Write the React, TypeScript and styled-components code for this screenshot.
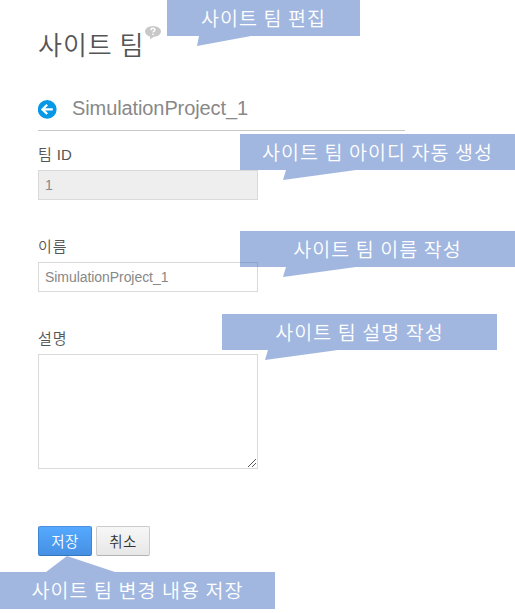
import React from 'react';
import styled, { createGlobalStyle } from 'styled-components';

const GlobalStyle = createGlobalStyle`
  * { box-sizing: border-box; }
  body { margin: 0; background: #fff; }
`;

const Page = styled.main`
  position: relative;
  width: 515px;
  height: 613px;
  overflow: hidden;
  padding: 26px 0 0 38px;
  color: #555;
  font-family: 'Liberation Sans', 'Noto Sans CJK KR', sans-serif;
  font-size: 14px;
`;

const Title = styled.h1`
  display: flex;
  align-items: flex-start;
  gap: 2px;
  height: 38px;
  margin: 0;
  font: 350 26px/36px 'Noto Sans CJK KR', sans-serif;
  letter-spacing: 1px;
  white-space: nowrap;
`;

const TitleText = styled.span`
  width: 105px;
`;

const HelpIcon = styled.svg`
  width: 16px;
  height: 14px;
`;

const Header = styled.header`
  display: flex;
  align-items: flex-start;
  gap: 15px;
  width: 367px;
  height: 45px;
  margin-top: 22px;
  padding-top: 10px;
  border-bottom: 1px solid #c8c8c8;
`;

const BackIcon = styled.svg`
  width: 19px;
  height: 19px;
  margin-top: 4px;
`;

const ProjectName = styled.h2`
  margin: 0;
  color: #888;
  font-size: 20px;
  line-height: 24px;
  font-weight: 400;
  letter-spacing: -0.1px;
`;

const Form = styled.form`
  width: 220px;
`;

const Field = styled.div<{ $gap: number }>`
  display: flex;
  flex-direction: column;
  margin-top: ${({ $gap }) => $gap}px;
`;

const Label = styled.label`
  height: 24px;
  margin-bottom: 3px;
  font: 350 15px/24px 'Liberation Sans', 'Noto Sans CJK KR', sans-serif;
  letter-spacing: 0.9px;
`;

const Latin = styled.span`
  margin-left: -1px;
  font-size: 15px;
  letter-spacing: 0;
`;

const Input = styled.input`
  width: 220px;
  height: 30px;
  padding: 0 6px;
  border: 1px solid #d9d9d9;
  border-radius: 0;
  outline: 0;
  background: #fff;
  color: #888;
  font: 14px 'Liberation Sans', sans-serif;
  letter-spacing: -0.06px;

  &:disabled { background: #eee; }
`;

const TextArea = styled.textarea`
  display: block;
  width: 220px;
  height: 115px;
  border: 1px solid #d9d9d9;
  outline: 0;
  resize: none;
`;

const AreaFrame = styled.div`
  position: relative;
`;

const Grip = styled.svg`
  position: absolute;
  right: 2px;
  bottom: 2px;
  width: 8px;
  height: 8px;
`;

const Actions = styled.div`
  display: flex;
  gap: 4px;
  margin-top: 57px;
`;

const Button = styled.button<{ $primary?: boolean }>`
  width: 54px;
  height: 30px;
  padding: 0;
  border: 1px solid;
  border-color: ${({ $primary }) => ($primary ? '#4b92df #3f86d2 #3577bd' : '#ccc #ccc #b3b3b3')};
  border-radius: 2px;
  background: ${({ $primary }) =>
    $primary ? 'linear-gradient(#54a9ff, #4690e3)' : 'linear-gradient(#f7f7f7, #e7e7e7)'};
  color: ${({ $primary }) => ($primary ? '#fff' : '#333')};
  font: 350 14.5px/26px 'Noto Sans CJK KR', sans-serif;
  letter-spacing: 0.4px;
`;

const Callout = styled.aside<{ $x: number; $y: number; $w: number; $h?: number }>`
  position: absolute;
  left: ${({ $x }) => $x}px;
  top: ${({ $y }) => $y}px;
  width: ${({ $w }) => $w}px;
  height: ${({ $h = 36 }) => $h}px;
  background: rgba(68, 112, 194, 0.5);
  color: #fff;
  font: 350 19.5px/36px 'Noto Sans CJK KR', sans-serif;
  letter-spacing: 1.1px;
  text-align: center;
  white-space: nowrap;
`;

const Tail = styled.span<{ $x: number; $w: number; $shape: string; $up?: boolean }>`
  position: absolute;
  left: ${({ $x }) => $x}px;
  top: ${({ $up }) => ($up ? '-16px' : '100%')};
  width: ${({ $w }) => $w}px;
  height: ${({ $up }) => ($up ? 16 : 10)}px;
  background: rgba(68, 112, 194, 0.5);
  clip-path: polygon(${({ $shape }) => $shape});
`;

const NOTES = [
  { text: '사이트 팀 편집', x: 167, y: 0, w: 193, tailX: 30, tailW: 54, shape: '2px 0, 54px 0, 0 10px' },
  { text: '사이트 팀 아이디 자동 생성', x: 240, y: 134, w: 275, tailX: 43, tailW: 73, shape: '3px 0, 73px 0, 0 10px' },
  { text: '사이트 팀 이름 작성', x: 240, y: 231, w: 275, tailX: 43, tailW: 73, shape: '3px 0, 73px 0, 0 10px' },
  { text: '사이트 팀 설명 작성', x: 222, y: 314, w: 275, tailX: 43, tailW: 73, shape: '3px 0, 73px 0, 0 10px' },
  { text: '사이트 팀 변경 내용 저장', x: 0, y: 572, w: 275, h: 37, tailX: 46, tailW: 69, shape: '0 16px, 21px 0, 69px 16px', up: true },
];

export default function App() {
  return (
    <>
      <GlobalStyle />
      <Page>
        <Title>
          <TitleText>사이트 팀</TitleText>
          <HelpIcon viewBox="0 0 16 14">
            <ellipse cx="8" cy="5.4" rx="8" ry="5.4" fill="#c8c8c8" />
            <path d="M4.8 9.5L5.2 13.2L10 10z" fill="#c8c8c8" />
            <path d="M5.9 4.1C6.1 1.7 10.1 1.8 9.9 4C9.8 5.2 8 5.2 8 6.6M8 7.7v1.4" fill="none" stroke="#fff" strokeWidth="1.5" />
          </HelpIcon>
        </Title>
        <Header>
          <BackIcon viewBox="0 0 19 19">
            <circle cx="9.2" cy="9.4" r="9.4" fill="#0799e6" />
            <path d="M14.8 9.4H4.5M9.2 4.8L4.4 9.4l4.8 4.6" fill="none" stroke="#fff" strokeWidth="2.2" />
          </BackIcon>
          <ProjectName>SimulationProject_1</ProjectName>
        </Header>
        <Form>
          <Field $gap={12}>
            <Label htmlFor="team-id">팀 <Latin>ID</Latin></Label>
            <Input id="team-id" defaultValue="1" disabled />
          </Field>
          <Field $gap={35}>
            <Label htmlFor="team-name">이름</Label>
            <Input id="team-name" defaultValue="SimulationProject_1" />
          </Field>
          <Field $gap={35}>
            <Label htmlFor="team-note">설명</Label>
            <AreaFrame>
              <TextArea id="team-note" />
              <Grip viewBox="0 0 8 8">
                <path d="M0 8L8 0M4 8l4-4" stroke="#555" strokeWidth="1" />
              </Grip>
            </AreaFrame>
          </Field>
          <Actions>
            <Button type="button" $primary>저장</Button>
            <Button type="button">취소</Button>
          </Actions>
        </Form>
        {NOTES.map((n) => (
          <Callout key={n.text} $x={n.x} $y={n.y} $w={n.w} $h={n.h}>
            {n.text}
            <Tail $x={n.tailX} $w={n.tailW} $shape={n.shape} $up={n.up} />
          </Callout>
        ))}
      </Page>
    </>
  );
}
